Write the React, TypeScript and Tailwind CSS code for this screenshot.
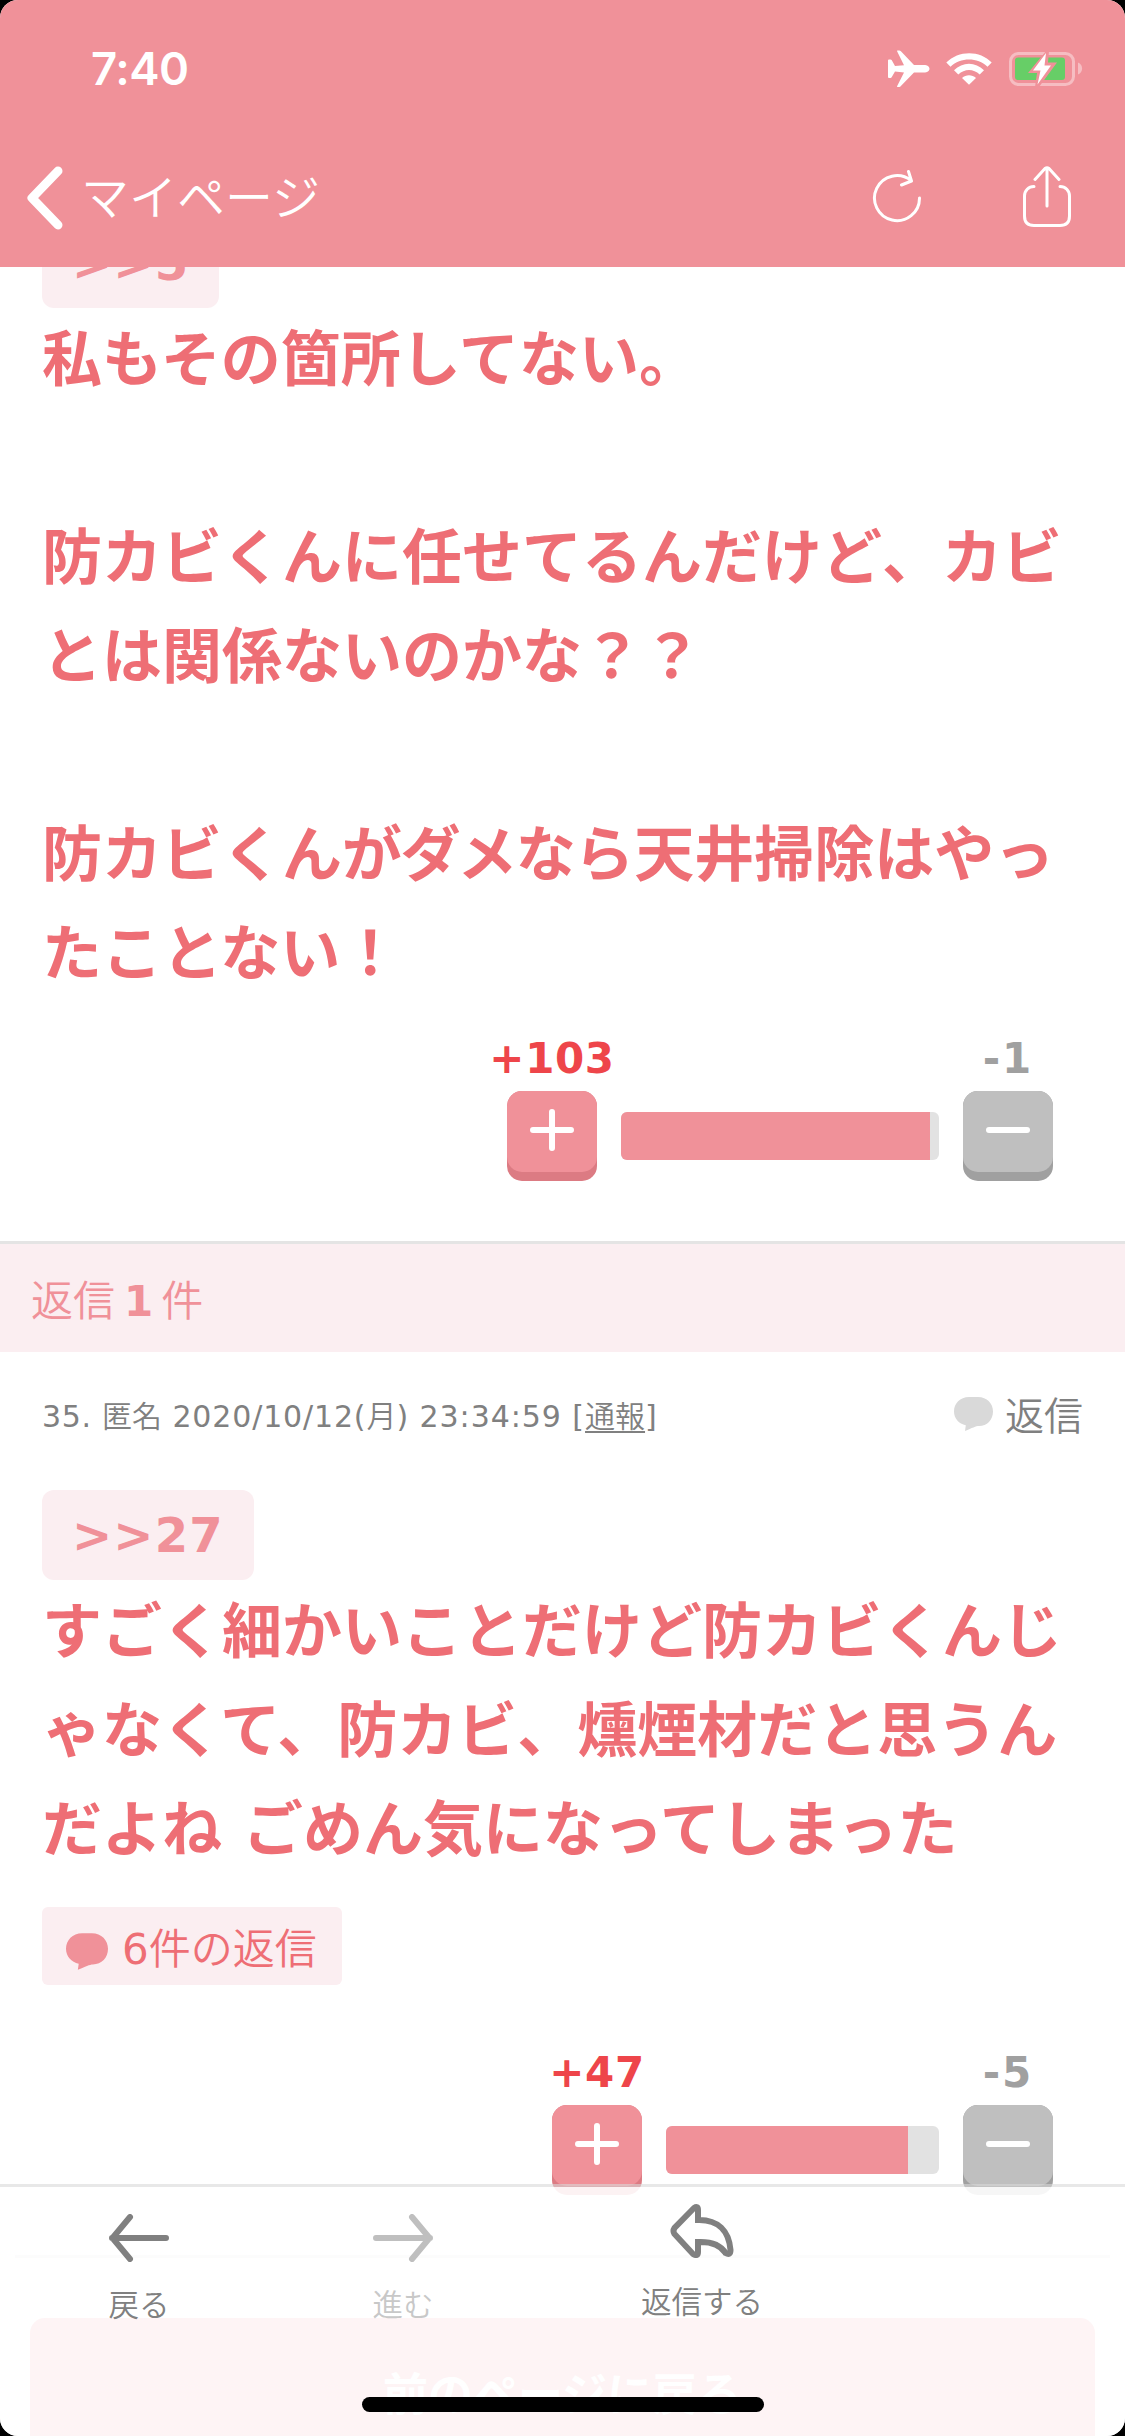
import type { ReactNode } from "react"

interface VoteProps {
  plus: number
  minus: number
  barWidth: number
  fill: number
}

function CommentBubble({ className }: { className: string }) {
  return (
    <svg viewBox="0 0 39 34" className={className} fill="currentColor">
      <path d="M15 0H24C33 0 39 6.500 39 14.500C39 23 33 29 25 29C22 29 18 31 11 34L11.800 28.300C5 27 0 21.500 0 14.500C0 6.500 6 0 15 0Z" />
    </svg>
  )
}

function StatusIcons() {
  return (
    <svg width="196" height="40" viewBox="0 0 196 40" fill="white">
      {/* airplane */}
      <path d="M0 11.500Q0 10.500 1 10.500H2.500Q3.300 10.500 3.800 11.300L7 17L16 16.200L9.200 2.500Q8.500 1.500 9.700 1.500H11.200Q12.200 1.500 12.900 2.300L26 16H36C39 16 41.500 17.500 41.500 19.800S39 23.500 36 23.500H26L12.900 37Q12.200 38 11.200 38H9.700Q8.500 38 9.200 37L16 23.500L7 22.600L3.800 28Q3.300 29 2.500 29H1Q0 29 0 28Z" />
      {/* wifi */}
      <path d="M58.300 13.500C70.500 1 92 1 103.700 13.500L99.500 17.700C89.500 8 72.500 8 62.500 17.700Z" />
      <path d="M66 21.200C74.500 12.500 87.500 12.500 96 21.200L91.700 25.500C85.500 19.500 76.500 19.500 70.300 25.500Z" />
      <path d="M74 29C78 25.200 84 25.200 88 29L81 35.800Z" />
      {/* battery */}
      <rect x="122.500" y="4.500" width="63" height="31" rx="8" fill="none" stroke="white" strokeOpacity="0.4" strokeWidth="3" />
      <path d="M190 13.500C195.500 15.500 195.500 23.500 190 25.500Z" fillOpacity="0.4" />
      <rect x="127" y="8.500" width="50" height="22.500" rx="3" fill="#67ce67" />
      <path d="M158 2L140 24H149L147 38H151L169 13.500H160L161 2Z" fill="#f09199" />
      <path d="M158 4L145 21.500H152.500L149.500 35.500L163 16.500H156.500Z" />
    </svg>
  )
}

function QuoteBadge({ id, className = "" }: { id: number; className?: string }) {
  return (
    <div
      className={`flex h-[90px] w-fit items-center rounded-xl bg-[#fbeef1] px-[30px] text-[48px] font-bold tracking-[1.1px] text-[#f09199] ${className}`}
    >
      &gt;&gt;{id}
    </div>
  )
}

function PostBody({ children }: { children: ReactNode }) {
  return (
    <p className="-mb-[3px] pt-[3px] text-[60px] leading-[99px] font-bold whitespace-pre text-[#ee6e75]">
      {children}
    </p>
  )
}

function VoteRow({ plus, minus, barWidth, fill }: VoteProps) {
  return (
    <div className="mr-[30px] flex items-end justify-end gap-6">
      <div className="flex w-[90px] flex-col items-center">
        <span className="text-[42px] leading-[46px] font-bold tracking-[0.6px] whitespace-nowrap text-[#ee454a]">+{plus}</span>
        <button className="mt-[9px] flex h-[90px] w-[90px] rounded-[15px] bg-[#dc7b83]">
          <span className="flex h-[81px] w-full items-center justify-center rounded-[15px] bg-[#f09199] pb-[5px]">
            <svg width="44" height="44" viewBox="0 0 44 44" stroke="white" strokeWidth="6" strokeLinecap="round">
              <path d="M3 23H41M22 5V41" />
            </svg>
          </span>
        </button>
      </div>
      <div className="mb-[21px] h-12 overflow-hidden rounded-md bg-[#e2e2e2]" style={{ width: barWidth }}>
        <div className="h-full bg-[#f09199]" style={{ width: `${fill}%` }} />
      </div>
      <div className="flex w-[90px] flex-col items-center">
        <span className="text-[42px] leading-[46px] font-bold tracking-[2px] whitespace-nowrap text-[#a0a0a0]">-{minus}</span>
        <button className="mt-[9px] flex h-[90px] w-[90px] rounded-[15px] bg-[#a0a0a0]">
          <span className="flex h-[81px] w-full items-center justify-center rounded-[15px] bg-[#bfbfbf] pb-[5px]">
            <svg width="44" height="44" viewBox="0 0 44 44" stroke="white" strokeWidth="6" strokeLinecap="round">
              <path d="M3 23H41" />
            </svg>
          </span>
        </button>
      </div>
    </div>
  )
}

function Header() {
  return (
    <header className="h-[267px] shrink-0 bg-[#f09199] text-white">
      <div className="flex h-[138px] items-center justify-between pr-[41px] pl-[91px]">
        <span className="font-['Inter'] text-[45.5px] font-semibold tracking-[-0.5px]">7:40</span>
        <StatusIcons />
      </div>
      <div className="flex h-[120px] items-center">
        <svg width="36" height="64" viewBox="0 0 36 64" className="ml-[27px]" fill="none" stroke="white" strokeWidth="9" strokeLinecap="round" strokeLinejoin="round">
          <path d="M31 5L5 32L31 59" />
        </svg>
        <span className="ml-[18px] text-[48px] font-[350]">マイページ</span>
        <svg width="50" height="54" viewBox="0 0 50 54" className="mb-[5px] ml-auto" fill="none" stroke="white" strokeWidth="3" strokeLinecap="round" strokeLinejoin="round">
          <path d="M47.500 29A22.500 22.500 0 1 1 39 11.500M36.500 2.500L39.500 12L29.500 16" />
        </svg>
        <svg width="48" height="62" viewBox="0 0 48 62" className="mr-[54px] mb-[2px] ml-[101px]" fill="none" stroke="white" strokeWidth="3" strokeLinecap="round" strokeLinejoin="round">
          <path d="M11 20.500C5.500 20.500 1.500 24.500 1.500 30V50Q1.500 59.500 11 59.500H37Q46.500 59.500 46.500 50V30C46.500 24.500 42.500 20.500 37 20.500M24 40V2M12 13.500L22 2.500Q24 1 26 2.500L36 13.500" />
        </svg>
      </div>
    </header>
  )
}

function Toolbar() {
  return (
    <nav className="absolute inset-x-0 bottom-0 flex h-[252px] border-t-[3px] border-[#d9d9d9]/60 bg-white/90 bg-clip-padding text-[30.5px] leading-9 font-[350] text-[#808080]">
      <div className="flex w-[278px] flex-col items-center pt-[27px]">
        <svg width="60" height="48" viewBox="0 0 60 48" fill="none" stroke="currentColor" strokeWidth="6" strokeLinecap="round" strokeLinejoin="round">
          <path d="M57 24H3M21 3L3.500 24L21 45" />
        </svg>
        <span className="mt-[26px]">戻る</span>
      </div>
      <div className="flex w-[250px] flex-col items-center pt-[27px] text-[#bfbfbf]">
        <svg width="60" height="48" viewBox="0 0 60 48" fill="none" stroke="currentColor" strokeWidth="6" strokeLinecap="round" strokeLinejoin="round">
          <path d="M3 24H57M39 3L56.500 24L39 45" />
        </svg>
        <span className="mt-[26px] text-[#c8c8c8]">進む</span>
      </div>
      <div className="flex w-[348px] flex-col items-center pt-[17px]">
        <svg width="64" height="54" viewBox="0 0 64 54" fill="none" stroke="currentColor" strokeWidth="6" strokeLinecap="round">
          <path d="M28 16V6Q28 1.500 24 4L4.500 24Q2.500 27 4.500 30L23 50Q28 53 28 48V38C40 37.500 50 40 55.500 49Q60.500 52 60.500 46C59 27 48 15.500 28 16Z" />
        </svg>
        <span className="mt-[27px]">返信する</span>
      </div>
    </nav>
  )
}

export default function App() {
  return (
    <div className="h-[2436px] w-[1125px] bg-black font-['DejaVu_Sans','Noto_Sans_CJK_JP',sans-serif]" lang="ja">
      <div className="relative flex h-full flex-col overflow-hidden rounded-[18px] bg-white">
        <Header />

        <main className="flex-1 overflow-hidden">
          <article className="-mt-[49px] px-[42px] pb-[60px]">
            <QuoteBadge id={5} />
            <PostBody>
              {`私もその箇所してない。

`}
              <span className="[font-kerning:none]">防カビくんに任せてるんだけど、カビ</span>
              {`
とは関係ないのかな？？

防カビくん`}
              <span className="tracking-[-1.5px]">がダメな</span>
              {`ら天井掃除はやっ
たことない！`}
            </PostBody>
            <div className="mt-[35px]">
              <VoteRow plus={103} minus={1} barWidth={318} fill={97.2} />
            </div>
          </article>

          <h2 className="flex h-[111px] items-center border-t-[3px] border-[#e4e4e4] bg-[#fbeef1] pt-[6px] pl-[31px] text-[42px] font-[350] text-[#f09199]">
            <span>返信</span>
            <b className="mr-[8px] ml-[9px] font-bold">1</b>
            <span>件</span>
          </h2>

          <article className="px-[42px]">
            <div className="flex h-[128px] items-center justify-between text-[#808080]">
              <p className="text-[30px] whitespace-pre">
                <span className="tracking-[0.7px]">35. </span>
                <span className="font-[350]">匿名</span>
                <span className="tracking-[0.85px]"> 2020/10/12(</span>
                <span className="font-[350]">月</span>
                <span className="tracking-[0.95px]">) 23:34:59 [</span>
                <u className="font-[350] decoration-2 underline-offset-4">通報</u>]
              </p>
              <div className="flex items-center gap-3 pt-[2px] text-[39px] font-[350]">
                <CommentBubble className="mb-[7px] h-[34px] w-[39px] text-[#d9d9d9]" />
                返信
              </div>
            </div>
            <QuoteBadge id={27} className="mt-[10px]" />
            <PostBody>{`すごく細かいことだけど防カビくんじ
ゃなくて、防カビ、燻煙材だと思うん
だよね ごめん気になってしまった`}</PostBody>
            <button className="mt-[30px] flex h-[78px] w-[300px] items-center rounded-md bg-[#fbeef1] pt-[6px] pl-6 text-[42px] text-[#ee6e75]">
              <CommentBubble className="mt-[4px] mr-[14px] h-[37px] w-[42px] text-[#f09199]" />
              6<span className="font-[350]">件の返信</span>
            </button>
            <div className="mt-[65px]">
              <VoteRow plus={47} minus={5} barWidth={273} fill={88.7} />
            </div>
          </article>

          <hr className="mx-[15px] mt-[60px] border-t-[3px] border-[#e4e4e4]" />
          <div className="mx-[30px] mt-[60px] flex h-[150px] items-center justify-center rounded-t-[15px] bg-[#f09199] pt-[5px] text-[45px] font-bold text-white">
            前のページに戻る
          </div>
        </main>

        <Toolbar />
        <div className="absolute bottom-6 left-[362px] h-[15px] w-[402px] rounded-full bg-black" />
      </div>
    </div>
  )
}
